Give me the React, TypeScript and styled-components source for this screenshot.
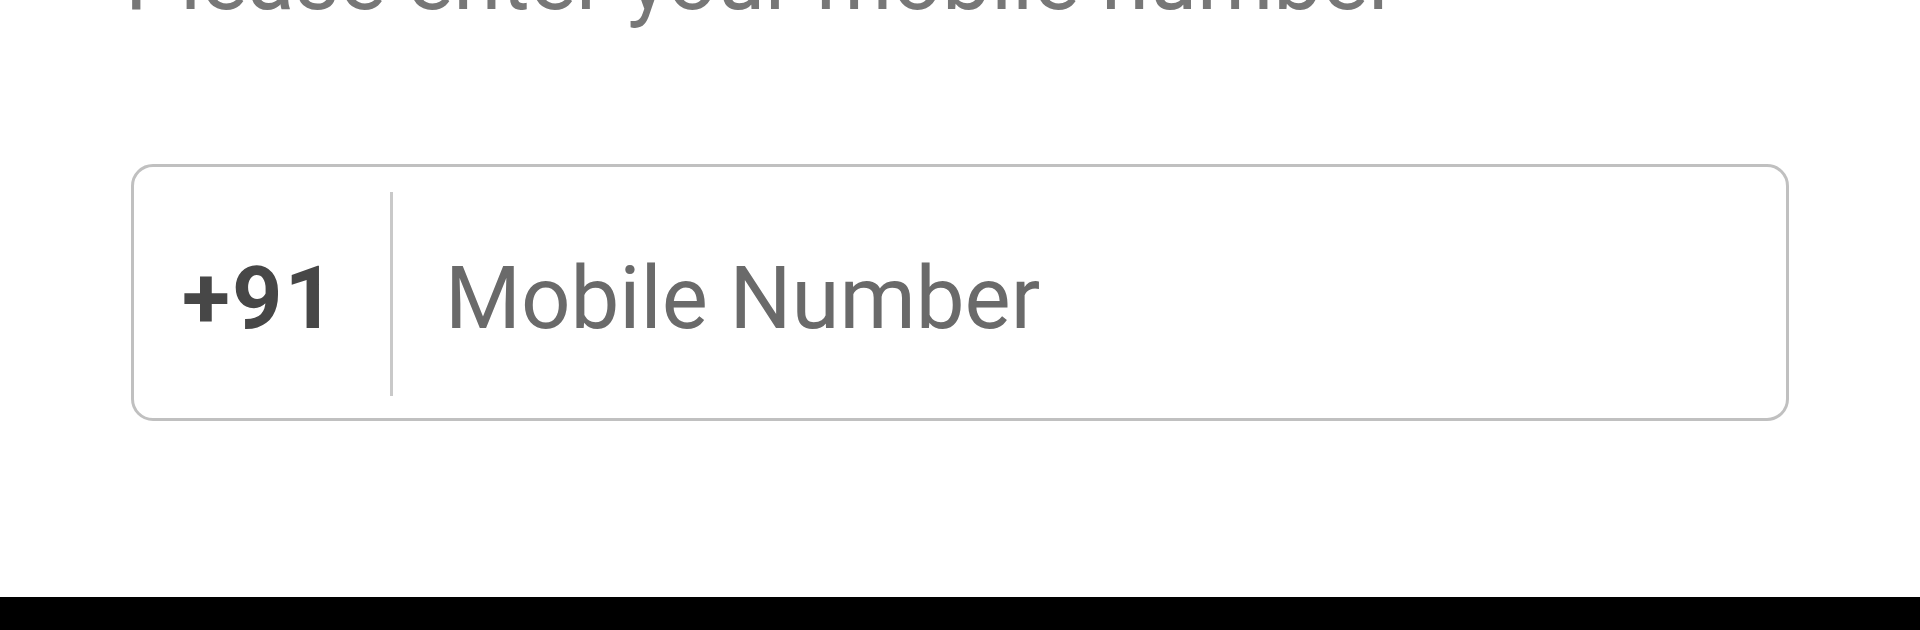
import React from "react";
import styled, { createGlobalStyle } from "styled-components";

const Global = createGlobalStyle`
  html, body { margin: 0; padding: 0; background: #ffffff; }
  body { font-family: Roboto, "Noto Sans", sans-serif; overflow: hidden; }
`;

const Page = styled.div`
  width: 1920px;
  height: 630px;
  display: flex;
  flex-direction: column;
  background: #ffffff;
  overflow: hidden;
`;

const Content = styled.main`
  flex: 1;
  display: flex;
  flex-direction: column;
  padding: 0 131px 0 125px;
`;

const Title = styled.h1`
  margin: -64px 0 0 0;
  font-family: Roboto, sans-serif;
  font-weight: 400;
  font-size: 87px;
  line-height: 1;
  color: #777777;
  white-space: nowrap;
`;

const Field = styled.label`
  margin-top: 141px;
  margin-left: 6px;
  height: 257px;
  box-sizing: border-box;
  border: 3px solid #c0c0c0;
  border-radius: 22px;
  display: flex;
  align-items: center;
  padding-left: 48px;
`;

const Code = styled.span`
  margin-top: 10px;
  font-family: Roboto, sans-serif;
  font-weight: 700;
  font-size: 88px;
  color: #474747;
  letter-spacing: 2px;
`;

const Divider = styled.span`
  align-self: stretch;
  width: 3px;
  margin: 25px 0 22px 53px;
  background: #c9c9c9;
`;

const Placeholder = styled.span`
  margin-top: 10px;
  margin-left: 52px;
  font-family: Roboto, sans-serif;
  font-weight: 400;
  font-size: 87px;
  color: #6a6a6a;
`;

const NavBar = styled.div`
  height: 33px;
  background: #000000;
`;

export default function App() {
  return (
    <>
      <Global />
      <Page>
        <Content>
          <Title>Please enter your mobile number</Title>
          <Field>
            <Code>+91</Code>
            <Divider />
            <Placeholder>Mobile Number</Placeholder>
          </Field>
        </Content>
        <NavBar />
      </Page>
    </>
  );
}
